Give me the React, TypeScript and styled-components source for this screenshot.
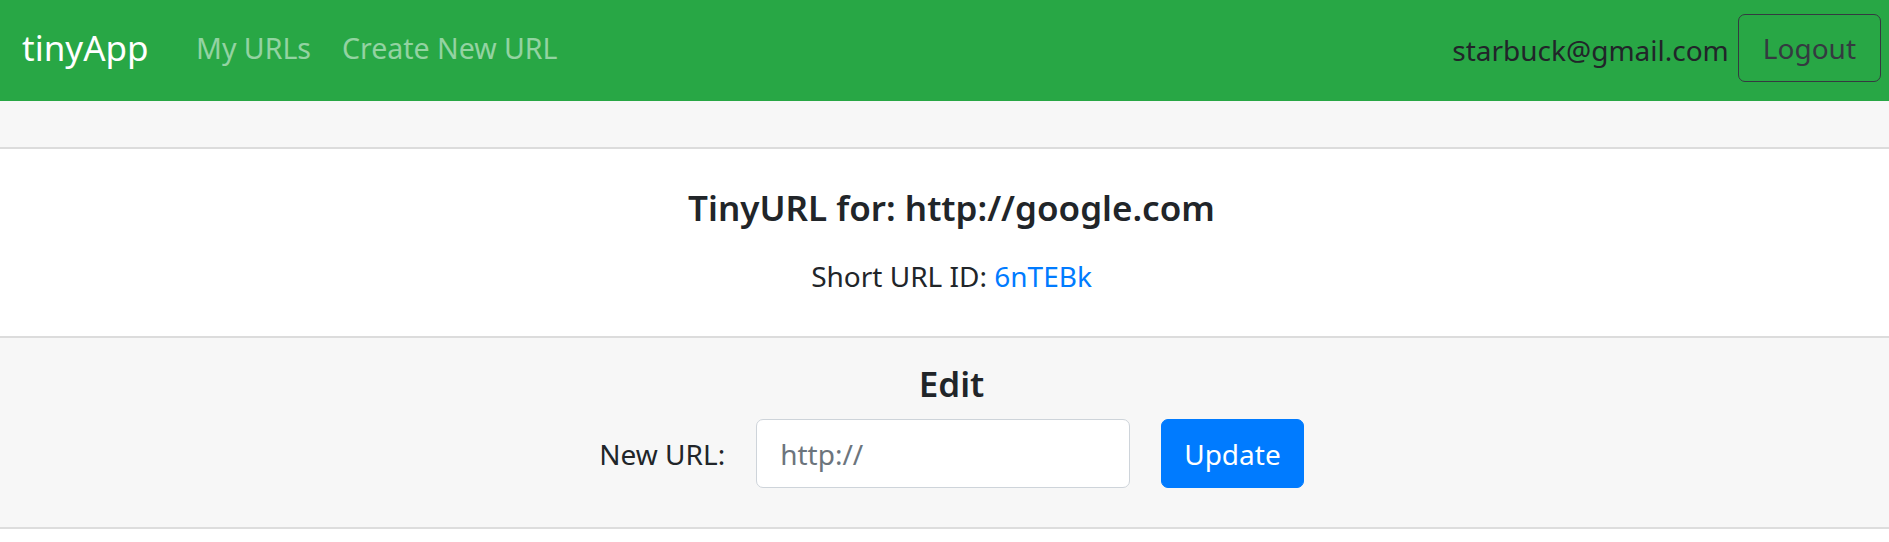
import React from "react";
import styled, { createGlobalStyle } from "styled-components";

const GlobalStyle = createGlobalStyle`
  html, body {
    margin: 0;
    padding: 0;
    background: #ffffff;
    font-family: "Noto Sans", "Open Sans", Arial, sans-serif;
    color: #212529;
  }
  * { box-sizing: border-box; }
`;

const Navbar = styled.nav`
  height: 101px;
  background: #28a745;
  display: flex;
  align-items: center;
  padding: 0 8px 5px 22px;
`;

const Brand = styled.a`
  font-size: 35px;
  line-height: 1.5;
  color: #ffffff;
  text-decoration: none;
  margin-right: 32px;
`;

const NavList = styled.div`
  display: flex;
  align-items: center;
  flex: 1;
`;

const NavLink = styled.a`
  font-size: 28.5px;
  line-height: 1.5;
  color: rgba(255, 255, 255, 0.5);
  text-decoration: none;
  padding: 0 15.5px;
`;

const UserText = styled.span`
  font-size: 28px;
  line-height: 1.5;
  color: #212529;
  margin-right: 9px;
  padding-top: 3px;
`;

const OutlineButton = styled.button`
  font-family: inherit;
  font-size: 28px;
  line-height: 1.5;
  color: #343a40;
  background: transparent;
  border: 1px solid #343a40;
  border-radius: 7px;
  padding: 12px 24px;
`;

const Main = styled.main`
  background: #f7f7f7;
  padding-top: 46px;
  border-bottom: 2px solid #dddddd;
`;

const Panel = styled.section<{ $white?: boolean }>`
  background: ${(p) => (p.$white ? "#ffffff" : "#f7f7f7")};
  border-top: 2px solid #dcdcdc;
  text-align: center;
  padding: ${(p) => (p.$white ? "38px 0 39px 14px" : "25px 0 39px 14px")};
`;

const Title = styled.h5<{ $gap: number }>`
  font-size: 35px;
  line-height: 1.2;
  font-weight: 600;
  margin: 0 0 ${(p) => p.$gap}px;
  color: #212529;
`;

const Text = styled.p`
  font-size: 28px;
  line-height: 1.5;
  margin: 0;
`;

const IdLink = styled.a`
  color: #007bff;
  text-decoration: none;
`;

const FormRow = styled.form`
  display: flex;
  justify-content: center;
  align-items: center;
  gap: 31px;
`;

const Label = styled.label`
  font-size: 28px;
  line-height: 1.5;
`;

const Input = styled.input`
  width: 374px;
  height: 69px;
  font-family: inherit;
  font-size: 28px;
  color: #495057;
  background: #ffffff;
  border: 1px solid #ced4da;
  border-radius: 7px;
  padding: 0 23px;
  &::placeholder {
    color: #6c757d;
  }
`;

const PrimaryButton = styled.button`
  height: 69px;
  font-family: inherit;
  font-size: 28px;
  line-height: 1.5;
  color: #ffffff;
  background: #007bff;
  border: 1px solid #007bff;
  border-radius: 7px;
  padding: 0 22px;
`;

export default function App() {
  return (
    <>
      <GlobalStyle />
      <Navbar>
        <Brand href="#">tinyApp</Brand>
        <NavList>
          <NavLink href="#">My URLs</NavLink>
          <NavLink href="#">Create New URL</NavLink>
        </NavList>
        <UserText>starbuck@gmail.com</UserText>
        <OutlineButton type="button">Logout</OutlineButton>
      </Navbar>
      <Main>
        <Panel $white>
          <Title $gap={26}>TinyURL for: http://google.com</Title>
          <Text>
            Short URL ID: <IdLink href="#">6nTEBk</IdLink>
          </Text>
        </Panel>
        <Panel>
          <Title $gap={14}>Edit</Title>
          <FormRow onSubmit={(e) => e.preventDefault()}>
            <Label htmlFor="newurl">New URL:</Label>
            <Input id="newurl" type="text" placeholder="http://" />
            <PrimaryButton type="submit">Update</PrimaryButton>
          </FormRow>
        </Panel>
      </Main>
    </>
  );
}
